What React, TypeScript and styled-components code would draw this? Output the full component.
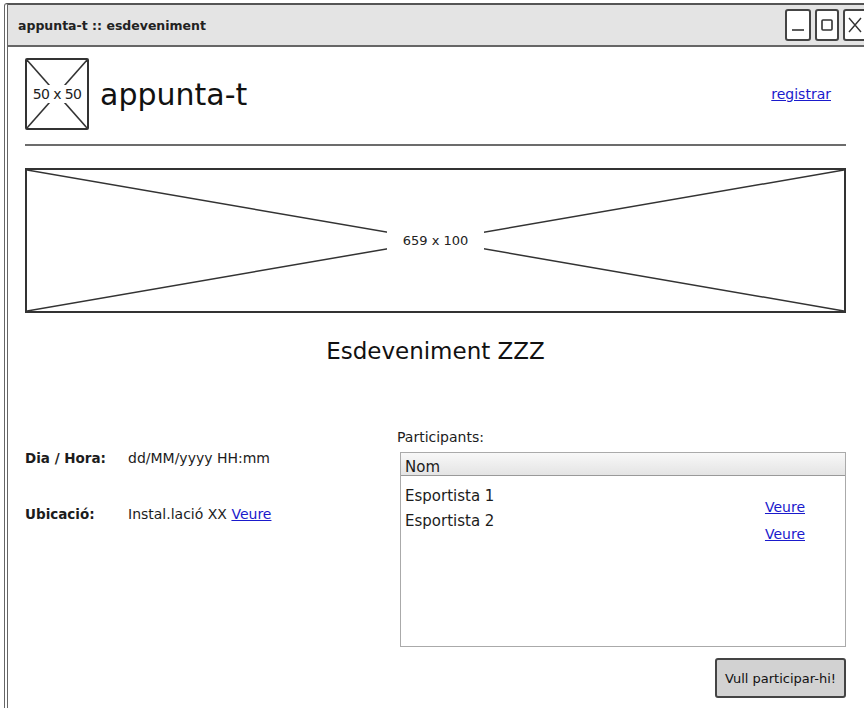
import * as React from "react";
import styled, { createGlobalStyle } from "styled-components";

const ink = "#1c1c1c";
const link = "#1a1acc";
const font = `"Comic Sans MS", "DejaVu Sans", "Open Sans", sans-serif`;

const GlobalStyle = createGlobalStyle`
  html, body {
    margin: 0;
    padding: 0;
    background: #fff;
    overflow: hidden;
  }
  body {
    font-family: ${font};
    color: ${ink};
  }
`;

interface Participant {
  name: string;
}

const participants: Participant[] = [{ name: "Esportista 1" }, { name: "Esportista 2" }];

// Placeholder box with a cross through it and its size in the middle
function Placeholder({ label, className }: { label: string; className?: string }): JSX.Element {
  return (
    <PlaceholderBox className={className}>
      <CrossSvg viewBox="0 0 100 100" preserveAspectRatio="none">
        <line x1="0" y1="0" x2="100" y2="100" />
        <line x1="100" y1="0" x2="0" y2="100" />
      </CrossSvg>
      <PlaceholderLabel>{label}</PlaceholderLabel>
    </PlaceholderBox>
  );
}

export default function App(): JSX.Element {
  return (
    <>
      <GlobalStyle />
      <Window>
        <TitleBar>
          <Title>appunta-t :: esdeveniment</Title>
          <WindowButtons>
            <WinButton>
              <svg width="14" height="14" viewBox="0 0 14 14">
                <line x1="1" y1="12" x2="13" y2="12" stroke="#333" strokeWidth="1.6" />
              </svg>
            </WinButton>
            <WinButton $narrow>
              <svg width="12" height="14" viewBox="0 0 12 14">
                <rect x="1" y="2" width="10" height="10" rx="1" fill="none" stroke="#333" strokeWidth="1.6" />
              </svg>
            </WinButton>
            <WinButton $narrow>
              <svg width="14" height="16" viewBox="0 0 14 16">
                <path d="M1 1 L13 15 M13 1 L1 15" stroke="#333" strokeWidth="1.4" />
              </svg>
            </WinButton>
          </WindowButtons>
        </TitleBar>

        <Content>
          <Header>
            <Brand>
              <Logo label="50 x 50" />
              <BrandName>appunta-t</BrandName>
            </Brand>
            <Link href="#" $size={14}>
              registrar
            </Link>
          </Header>
          <Rule />

          <Banner label="659 x 100" />

          <Heading>Esdeveniment ZZZ</Heading>

          <Details>
            <InfoColumn>
              <InfoRow>
                <InfoLabel>Dia / Hora:</InfoLabel>
                <InfoValue>dd/MM/yyyy HH:mm</InfoValue>
              </InfoRow>
              <InfoRow>
                <InfoLabel>Ubicació:</InfoLabel>
                <InfoValue>
                  Instal.lació XX <Link href="#">Veure</Link>
                </InfoValue>
              </InfoRow>
            </InfoColumn>

            <ParticipantsColumn>
              <SectionLabel>Participants:</SectionLabel>
              <Table>
                <TableHead>Nom</TableHead>
                <TableBody>
                  <Names>
                    {participants.map(p => (
                      <Name key={p.name}>{p.name}</Name>
                    ))}
                  </Names>
                  <Actions>
                    {participants.map(p => (
                      <Link key={p.name} href="#">
                        Veure
                      </Link>
                    ))}
                  </Actions>
                </TableBody>
              </Table>
              <ButtonRow>
                <JoinButton>Vull participar-hi!</JoinButton>
              </ButtonRow>
            </ParticipantsColumn>
          </Details>
        </Content>
      </Window>
    </>
  );
}

const Window = styled.div`
  box-sizing: border-box;
  width: 880px;
  height: 720px;
  margin: 3px 0 0 4px;
  border: 2px solid #555;
  border-left: 4px double #666;
  border-radius: 3px 3px 0 0;
  background: #fff;
`;

const TitleBar = styled.div`
  display: flex;
  align-items: center;
  justify-content: space-between;
  height: 40px;
  padding: 0 12px 0 10px;
  background: #e4e4e4;
  border-bottom: 2px solid #666;
`;

const Title = styled.div`
  font-size: 12.5px;
  font-weight: bold;
  color: #222;
`;

const WindowButtons = styled.div`
  display: flex;
  gap: 4px;
  align-self: flex-start;
  margin-top: 4px;
  margin-right: 3px;
`;

const WinButton = styled.div<{ $narrow?: boolean }>`
  box-sizing: border-box;
  width: ${p => (p.$narrow ? 24 : 26)}px;
  height: 32px;
  display: flex;
  align-items: center;
  justify-content: center;
  background: #fff;
  border: 2px solid #444;
  border-radius: 3px;
`;

const Content = styled.div`
  width: 821px;
  margin-left: 17px;
  padding-top: 11px;
`;

const Header = styled.div`
  display: flex;
  align-items: center;
  justify-content: space-between;
  padding-right: 15px;
`;

const Brand = styled.div`
  display: flex;
  align-items: center;
  gap: 11px;
`;

const BrandName = styled.div`
  font-size: 30px;
  color: #111;
`;

const PlaceholderBox = styled.div`
  position: relative;
  box-sizing: border-box;
  border: 2px solid #333;
  background: #fff;
  display: flex;
  align-items: center;
  justify-content: center;
`;

const CrossSvg = styled.svg`
  position: absolute;
  inset: 0;
  width: 100%;
  height: 100%;

  line {
    stroke: #333;
    stroke-width: 1.5px;
    vector-effect: non-scaling-stroke;
  }
`;

const PlaceholderLabel = styled.span`
  position: relative;
  background: #fff;
  padding: 2px 4px;
  font-size: 13px;
  color: #222;
`;

const Logo = styled(Placeholder)`
  width: 64px;
  height: 72px;
  border-radius: 2px;

  ${PlaceholderLabel} {
    padding: 1px 0;
    font-size: 14px;
    letter-spacing: -0.6px;
  }
`;

const Rule = styled.hr`
  margin: 14px 0 0;
  border: 0;
  height: 2px;
  background: #6c6c6c;
`;

const Banner = styled(Placeholder)`
  margin-top: 22px;
  height: 145px;

  ${PlaceholderLabel} {
    padding: 2px 16px;
  }
`;

const Heading = styled.h1`
  margin: 25px 0 0;
  text-align: center;
  font-size: 23px;
  font-weight: normal;
  color: #111;
`;

const Details = styled.div`
  display: grid;
  grid-template-columns: 372px 1fr;
  margin-top: 64px;
`;

const InfoColumn = styled.div`
  display: flex;
  flex-direction: column;
  gap: 38px;
  padding-top: 21px;
`;

const InfoRow = styled.div`
  display: grid;
  grid-template-columns: 103px 1fr;
  font-size: 14px;
  line-height: 18px;
`;

const InfoLabel = styled.span`
  font-weight: bold;
  font-size: 13.5px;
`;

const InfoValue = styled.span``;

const Link = styled.a<{ $size?: number }>`
  color: ${link};
  text-decoration: underline;
  font-size: ${p => p.$size ?? 14}px;
`;

const ParticipantsColumn = styled.div`
  display: flex;
  flex-direction: column;
`;

const SectionLabel = styled.div`
  font-size: 14px;
  line-height: 18px;
  margin-bottom: 6px;
`;

const Table = styled.div`
  box-sizing: border-box;
  margin-left: 3px;
  height: 195px;
  border: 1px solid #aaa;
  display: flex;
  flex-direction: column;
`;

const TableHead = styled.div`
  height: 22px;
  padding: 0 4px;
  display: flex;
  align-items: flex-end;
  font-size: 15px;
  line-height: 1;
  background: linear-gradient(#f8f8f8, #e4e4e4);
  border-bottom: 1px solid #999;
`;

const TableBody = styled.div`
  display: flex;
  justify-content: space-between;
  padding: 11px 40px 0 4px;
`;

const Names = styled.div`
  display: flex;
  flex-direction: column;
  gap: 6px;
`;

const Name = styled.div`
  font-size: 15px;
  line-height: 19px;
`;

const Actions = styled.div`
  display: flex;
  flex-direction: column;
  gap: 9px;
  padding-top: 11px;
  line-height: 18px;
`;

const ButtonRow = styled.div`
  display: flex;
  justify-content: flex-end;
  margin-top: 11px;
`;

const JoinButton = styled.button`
  box-sizing: border-box;
  width: 131px;
  height: 40px;
  font-family: ${font};
  font-size: 13px;
  color: #111;
  background: #d2d2d2;
  border: 2px solid #444;
  border-radius: 3px;
  padding: 0;
`;
